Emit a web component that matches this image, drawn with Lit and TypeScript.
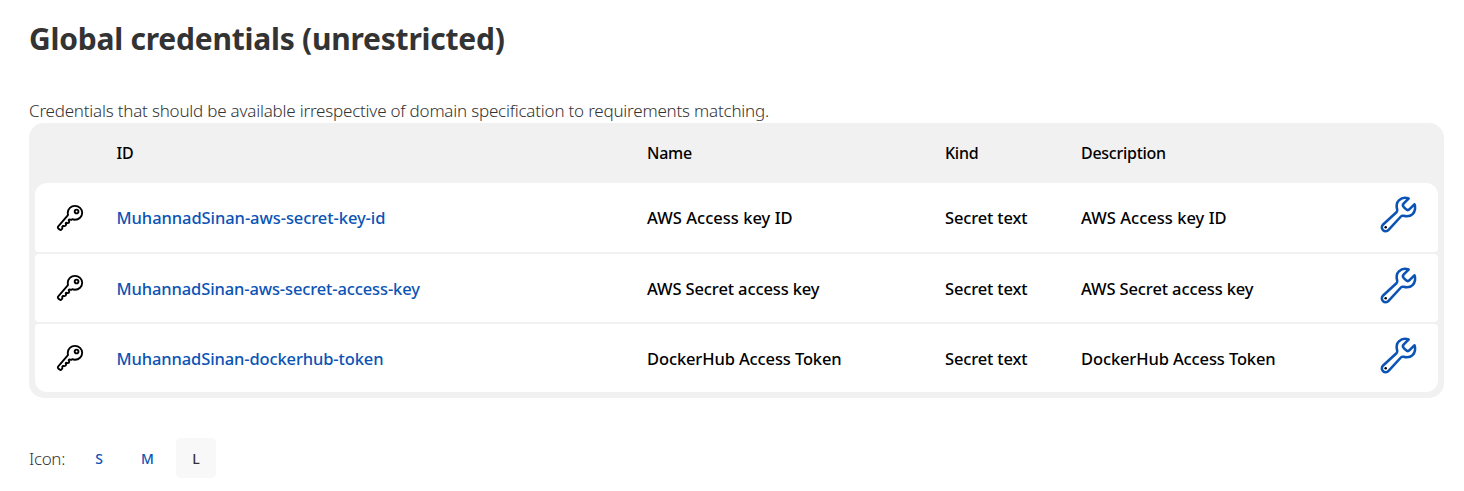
import { LitElement, html, css, svg } from "lit";
import { customElement, property } from "lit/decorators.js";

interface Credential {
  id: string;
  name: string;
  kind: string;
  cls: string;
}

const CREDENTIALS: Credential[] = [
  { id: "MuhannadSinan-aws-secret-key-id", name: "AWS Access key ID", kind: "Secret text", cls: "first" },
  { id: "MuhannadSinan-aws-secret-access-key", name: "AWS Secret access key", kind: "Secret text", cls: "middle" },
  { id: "MuhannadSinan-dockerhub-token", name: "DockerHub Access Token", kind: "Secret text", cls: "last" },
];

const keyShape = svg`<path d="M218.1 167.17c0 13 0 25.6 4.1 37.4-43.1 50.6-156.9 184.3-167.5 194.5a20.17 20.17 0 00-6.7 15c0 8.5 5.2 16.7 9.6 21.3 6.6 6.9 34.8 33 40 28 15.4-15 18.5-19 24.8-25.2 9.5-9.3-1-28.3 2.3-36s6.8-9.2 12.5-10.4 15.8 2.9 23.7 3c8.3.1 12.8-3.4 19-9.2 5-4.6 8.6-8.9 8.7-15.6.2-9-12.8-20.9-3.1-30.4s23.7 6.2 34 5 22.8-15.5 24.1-21.6-11.7-21.8-9.7-30.7c.7-3 6.8-10 11.4-11s25 6.9 29.6 5.9c5.6-1.2 12.1-7.1 17.4-10.4 15.5 6.7 29.6 9.4 47.7 9.4 68.5 0 124-53.4 124-119.2S408.5 48 340 48s-121.9 53.37-121.9 119.17zM400 144a32 32 0 11-32-32 32 32 0 0132 32z"/>`;

const wrenchShape = svg`<path d="M393.87 190a32.1 32.1 0 01-45.25 0l-26.57-26.57a32.09 32.09 0 010-45.26L382.19 58a1 1 0 00-.3-1.64c-38.82-16.64-89.15-8.16-121.11 23.57-30.58 30.35-32.32 76-21.12 115.84a31.93 31.93 0 01-9.06 32.08L64 380a48.17 48.17 0 1068 68l153.86-167a31.93 31.93 0 0131.6-9.13c39.54 10.59 84.54 8.6 114.72-21.19 32.49-32 39.5-88.56 23.75-120.93a1 1 0 00-1.6-.26z"/><circle class="dot" cx="96" cy="416" r="16"/>`;

@customElement("credential-row")
export class CredentialRow extends LitElement {
  @property({ attribute: false }) item!: Credential;

  static styles = css`
    :host {
      display: grid;
      grid-template-columns: 81.5px 530.5px 298px 136px 1fr auto;
      align-items: center;
      box-sizing: border-box;
      padding-top: 2px;
      background: #fff;
      font-size: 16.5px;
      line-height: 24px;
      font-weight: 500;
      color: #000;
      white-space: nowrap;
    }
    :host(.first) { padding-top: 1px; }
    svg { display: block; fill: none; stroke-width: 32; stroke-linecap: round; stroke-linejoin: round; }
    .key { width: 30px; height: 30px; margin: -1px 0 0 20px; stroke: #000; }
    :host(.first) .key { margin-top: 0; }
    .wrench { width: 41px; height: 41px; margin: -7px 19px 0 0; stroke: #0b53b5; }
    .dot { fill: #000; stroke: none; }
    .id { color: #0b53b5; text-decoration: none; letter-spacing: -0.12px; }
    .name { letter-spacing: -0.12px; }
    .kind { letter-spacing: -0.15px; }
    :host(.first) .name { letter-spacing: 0.03px; }
    :host(.first) .id { letter-spacing: -0.07px; }
  `;

  render() {
    const c = this.item;
    return html`
      <svg class="key" viewBox="0 0 512 512">${keyShape}</svg>
      <span><a class="id">${c.id}</a></span>
      <span class="name">${c.name}</span>
      <span class="kind">${c.kind}</span>
      <span class="name">${c.name}</span>
      <svg class="wrench" viewBox="0 0 512 512">${wrenchShape}</svg>
    `;
  }
}

@customElement("app-root")
export class AppRoot extends LitElement {
  static styles = css`
    :host {
      display: block;
      box-sizing: border-box;
      height: 491px;
      padding: 18px 20px 0 29px;
      background: #fff;
      color: #333;
      font-family: "Noto Sans", "Open Sans", sans-serif;
      font-size: 16px;
    }
    h1 { margin: 0; font-size: 30px; line-height: 42px; font-weight: 700; letter-spacing: -0.23px; white-space: nowrap; }
    .intro { margin: 39px 0 0; height: 24px; font-size: 17px; line-height: 24px; font-weight: 300; letter-spacing: -0.21px; white-space: nowrap; }
    .table { display: flex; flex-direction: column; gap: 2px; box-sizing: border-box; width: 1415px; height: 275px; padding: 0 6px 6px; border-radius: 15px; background: #f1f1f1; }
    .head { display: grid; grid-template-columns: 81.5px 530.5px 298px 136px 1fr; box-sizing: border-box; height: 58px; padding-top: 2px; align-items: center; color: #000; font-weight: 500; letter-spacing: -0.27px; }
    credential-row { height: 68.33px; border-radius: 4px; }
    .first { height: 69px; border-radius: 12px 12px 4px 4px; }
    .last { border-radius: 4px 4px 12px 12px; }
    .sizes { display: flex; align-items: center; height: 40px; margin-top: 40px; }
    .label { width: 50px; font-size: 17px; font-weight: 300; letter-spacing: -0.35px; }
    .size { display: flex; align-items: center; justify-content: center; width: 40px; height: 40px; margin-right: 8.5px; border-radius: 5px; font-size: 14px; font-weight: 500; color: #0b53b5; }
    .current { background: #f8f8f8; color: #333; }
  `;

  render() {
    return html`
      <h1><span>Global credentials (unrestricted)</span></h1>
      <p class="intro"><span>Credentials that should be available irrespective of domain specification to requirements matching.</span></p>
      <div class="table">
        <div class="head">
          <span></span><span>ID</span><span>Name</span><span>Kind</span><span>Description</span>
        </div>
        ${CREDENTIALS.map((c) => html`<credential-row class=${c.cls} .item=${c}></credential-row>`)}
      </div>
      <div class="sizes">
        <span class="label">Icon:</span>
        <span class="size">S</span>
        <span class="size">M</span>
        <span class="size current">L</span>
      </div>
    `;
  }
}
